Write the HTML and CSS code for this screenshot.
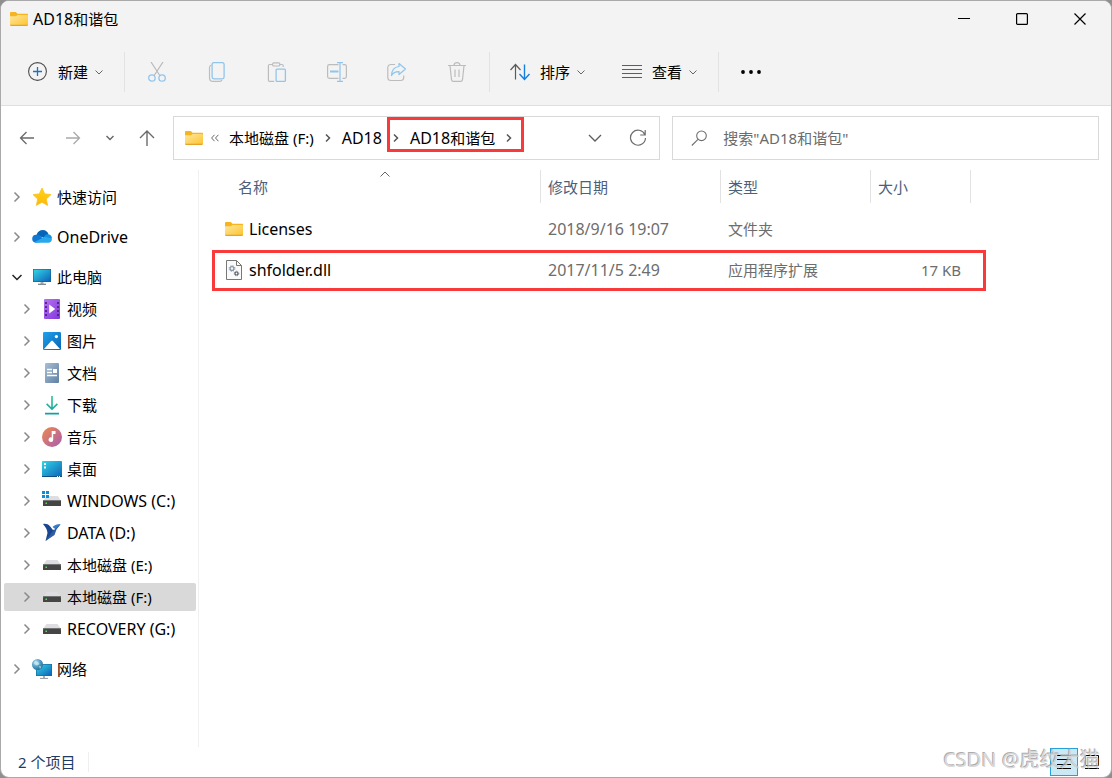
FILE: index.html
```html
<!DOCTYPE html>
<html lang="zh-CN">
<head>
<meta charset="utf-8">
<title>AD18和谐包</title>
<link rel="stylesheet" href="styles.css">
</head>
<body>
<svg class="defs" aria-hidden="true">
  <defs>
    <linearGradient id="gFolder" x1="0" y1="0" x2="1" y2="1"><stop offset="0" stop-color="#ffe7a0"/><stop offset="1" stop-color="#fcc42f"/></linearGradient>
    <linearGradient id="gScreen" x1="0" y1="0" x2="1" y2="1"><stop offset="0" stop-color="#34d5e6"/><stop offset="1" stop-color="#0a62b8"/></linearGradient>
    <linearGradient id="gVideo" x1="0" y1="0" x2="1" y2="1"><stop offset="0" stop-color="#b673f0"/><stop offset="1" stop-color="#8236dc"/></linearGradient>
    <linearGradient id="gPic" x1="0" y1="0" x2="1" y2="1"><stop offset="0" stop-color="#1fa3ea"/><stop offset="1" stop-color="#0a63b5"/></linearGradient>
    <linearGradient id="gDoc" x1="0" y1="0" x2="1" y2="1"><stop offset="0" stop-color="#a9bed3"/><stop offset="1" stop-color="#5f80a5"/></linearGradient>
    <linearGradient id="gMusic" x1="0" y1="0" x2="1" y2="1"><stop offset="0" stop-color="#f08a4b"/><stop offset="1" stop-color="#a75bb4"/></linearGradient>
    <linearGradient id="gDown" x1="0" y1="0" x2="0" y2="1"><stop offset="0" stop-color="#2cc58d"/><stop offset="1" stop-color="#0f9fa6"/></linearGradient>
    <linearGradient id="gStar" x1="0" y1="0" x2="0" y2="1"><stop offset="0" stop-color="#ffd515"/><stop offset="1" stop-color="#fdb80c"/></linearGradient>
    <radialGradient id="gGlobe" cx=".35" cy=".3" r=".8"><stop offset="0" stop-color="#b9e0f2"/><stop offset=".5" stop-color="#4f9cc5"/><stop offset="1" stop-color="#1d6590"/></radialGradient>
  </defs>
  <symbol id="folder" viewBox="0 0 18 14"><path d="M0 1.2C0 .5.5 0 1.2 0h4.6l1.7 1.8H17c.6 0 1 .4 1 1V8H0z" fill="#f6b41f"/><path d="M0 4.2h6l1.600-1.200H17c.6 0 1 .3 1 .8v9.200H0z" fill="url(#gFolder)"/><path d="M0 12.800h18c0 .7-.4 1.200-1 1.200H1c-.6 0-1-.5-1-1.200z" fill="#e5a32d"/></symbol>
  <symbol id="right" viewBox="0 0 10 12"><path d="M2.500 1.500 7 6l-4.500 4.500" fill="none" stroke="currentColor" stroke-width="1.500"/></symbol>
  <symbol id="next" viewBox="0 0 10 12"><path d="M3 2.500 6.500 6 3 9.500" fill="none" stroke="currentColor" stroke-width="1.500"/></symbol>
  <symbol id="down" viewBox="0 0 10 10"><path d="M1.500 3.500 5 7l3.500-3.500" fill="none" stroke="currentColor"/></symbol>
  <symbol id="drive" viewBox="0 0 20 20"><path d="M4.500 5h11L19 10H1z" fill="#dedee2"/><rect x="1" y="10" width="18" height="5" rx=".6" fill="#454545"/><path d="M1 9.500h18" stroke="#737373"/><rect x="3.500" y="11.500" width="1.500" height="1.500" fill="#3cf03c"/></symbol>
</svg>

<div class="window">
  <header class="top">
    <div class="titlebar">
      <svg class="folder"><use href="#folder"/></svg>
      <h1 class="title"><span class="latin">AD18</span>和谐包</h1>
      <button class="winbtn" aria-label="最小化"><svg width="12" height="12"><path d="M0 5.500h12" stroke="#000"/></svg></button>
      <button class="winbtn" aria-label="最大化"><svg width="12" height="12"><rect x=".6" y=".6" width="10.800" height="10.800" rx="1" fill="none" stroke="#000" stroke-width="1.200"/></svg></button>
      <button class="winbtn" aria-label="关闭"><svg width="12" height="12"><path d="m.5.5 11 11m0-11-11 11" stroke="#000" stroke-width="1.200"/></svg></button>
    </div>
    <div class="toolbar">
      <button class="cmd">
        <svg width="20" height="20" fill="none"><circle cx="9.500" cy="9.500" r="8.900" stroke="#4c4c4c" stroke-width="1.100"/><path d="M9.500 5v9M5 9.500h9" stroke="#1276c9" stroke-width="1.300"/></svg>
        <span>新建</span><svg class="chev"><use href="#down"/></svg>
      </button>
      <i class="sep"></i>
      <button class="tool" aria-label="剪切"><svg width="20" height="20" fill="none"><path d="m4 0 8.800 13.500M16 0 7.200 13.500" stroke="#b9b9b9" stroke-width="1.200"/><circle cx="4.900" cy="16" r="3.200" stroke="#90c5ec" stroke-width="1.300"/><circle cx="15.100" cy="16" r="3.200" stroke="#90c5ec" stroke-width="1.300"/></svg></button>
      <button class="tool" aria-label="复制"><svg width="20" height="20" fill="none"><path d="M4.500 3C3 3.500 2.500 4.300 2.500 5.500v10.200c0 2.400 1.400 3.700 3.700 3.700h6.600c1 0 1.800-.5 2.200-1.400" stroke="#bdbdbd" stroke-width="1.200"/><rect x="5.100" y=".6" width="12" height="16.300" rx="1.800" fill="#f3f3f3" stroke="#90c5ec" stroke-width="1.300"/></svg></button>
      <button class="tool" aria-label="粘贴"><svg width="20" height="20" fill="none"><path d="M6 2.500H2.600c-.8 0-1.200.5-1.200 1.200v14.500c0 .8.400 1.200 1.200 1.200h4.600M12.500 2.500H15c.8 0 1.200.5 1.200 1.200V5" stroke="#bcbcbc" stroke-width="1.200"/><rect x="5.500" y=".8" width="7.500" height="3.200" rx="1.600" stroke="#bcbcbc" stroke-width="1.200"/><rect x="9.100" y="7.100" width="9.300" height="12.300" rx="1" stroke="#90c5ec" stroke-width="1.300"/></svg></button>
      <button class="tool" aria-label="重命名"><svg width="20" height="20" fill="none"><path d="M11.500 2.600H2.400C1.200 2.600.6 3.200.6 4.400v10.200c0 1.200.6 1.800 1.800 1.800h9.100m4-13.800h2.100c1.200 0 1.800.6 1.800 1.800v10.200c0 1.200-.6 1.800-1.800 1.800h-2.100" stroke="#bcbcbc" stroke-width="1.200"/><path d="M10 .6h6M10 19.400h6M13 .6v18.800" stroke="#90c5ec" stroke-width="1.200"/><path d="M3 9.500h8.500" stroke="#90c5ec" stroke-width="2"/></svg></button>
      <button class="tool" aria-label="共享"><svg width="20" height="20" fill="none"><path d="M8 2.500H4C2 2.500.8 3.700.8 5.500v10c0 1.800 1.200 3 3.200 3h9.500c2 0 3.200-1.200 3.200-3v-2" stroke="#bcbcbc" stroke-width="1.200"/><path d="M12 1.500 18.500 7 12 12.500V9.600c-3.500-.2-5.700 1-7.500 3.900C4.700 8.400 7.500 5 12 4.500z" stroke="#90c5ec" stroke-width="1.200" stroke-linejoin="round"/></svg></button>
      <button class="tool" aria-label="删除"><svg width="20" height="20" fill="none" stroke="#bcbcbc" stroke-width="1.200"><path d="M1 3.500h18M7 3.500C7 1.500 8.200.6 10 .6s3 .9 3 2.900M3 3.500l1.500 14.200c.2 1.200.8 1.700 1.900 1.700h7.200c1.100 0 1.700-.5 1.900-1.700L17 3.500M8 7.500v7.500M12 7.500v7.500"/></svg></button>
      <i class="sep"></i>
      <button class="cmd">
        <svg width="20" height="20" fill="none"><path d="M5.500 17.500V3M.5 8l5-5.500 5 5.500" stroke="#5b5b5b" stroke-width="1.200"/><path d="M14.500 2.500V17m-5-5 5 5.500 5-5.500" stroke="#157fdc" stroke-width="1.400"/></svg>
        <span>排序</span><svg class="chev"><use href="#down"/></svg>
      </button>
      <button class="cmd">
        <svg width="20" height="20"><path d="M0 3.500h20M0 7.500h20M0 11.500h20M0 15.500h20" stroke="#5d5d5d"/></svg>
        <span>查看</span><svg class="chev"><use href="#down"/></svg>
      </button>
      <i class="sep"></i>
      <button class="tool" aria-label="查看更多"><svg width="20" height="20"><circle cx="2" cy="10" r="1.900"/><circle cx="10" cy="10" r="1.900"/><circle cx="18" cy="10" r="1.900"/></svg></button>
    </div>
  </header>

  <nav class="navrow" aria-label="导航">
    <button class="nav" aria-label="后退"><svg width="16" height="16" fill="none" stroke="#6a6a6a" stroke-width="1.300"><path d="M15 8H1.500M7.500 2l-6 6 6 6"/></svg></button>
    <button class="nav" aria-label="前进"><svg width="16" height="16" fill="none" stroke="#a9a9a9" stroke-width="1.300"><path d="M1 8h13.500M8.500 2l6 6-6 6"/></svg></button>
    <button class="nav narrow" aria-label="最近浏览的位置"><svg class="chev" viewBox="0 0 10 10" fill="none" stroke="#666" stroke-width="1.400"><path d="M1.500 3 5 6.500 8.500 3"/></svg></button>
    <button class="nav" aria-label="向上"><svg width="16" height="16" fill="none" stroke="#6a6a6a" stroke-width="1.400"><path d="M8 16V1M1 8l7-7 7 7"/></svg></button>
    <div class="address">
      <svg class="folder"><use href="#folder"/></svg>
      <svg class="more" viewBox="0 0 8 8" fill="none" stroke="#666"><path d="M3.500.8.600 4l2.900 3.200M7.400.8 4.500 4l2.900 3.200"/></svg>
      <a href="#f">本地磁盘 (F:)</a><svg class="crumb"><use href="#next"/></svg>
      <a class="latin" href="#ad18">AD18</a>
      <span class="current"><svg class="crumb"><use href="#next"/></svg><a href="#pack"><span class="latin">AD18</span>和谐包</a><svg class="crumb"><use href="#next"/></svg></span>
      <button class="addrbtn first" aria-label="以前的位置"><svg width="14" height="14" fill="none" stroke="#5c5c5c" stroke-width="1.300"><path d="m1 4 6 6 6-6"/></svg></button>
      <button class="addrbtn" aria-label="刷新"><svg width="18" height="18" fill="none" stroke="#6e6e6e" stroke-width="1.200"><path d="M15.800 5.500A7.500 7.500 0 1 0 16.500 9M16.200 1v5h-5"/></svg></button>
    </div>
    <label class="search">
      <svg width="16" height="16" fill="none" stroke="#6e6e6e" stroke-width="1.100"><circle cx="10.500" cy="5.800" r="4.800"/><path d="M7 9.300.8 15.500"/></svg>
      <input type="text" aria-label="搜索" placeholder='搜索"AD18和谐包"'>
    </label>
  </nav>

  <div class="body">
    <aside class="tree">
      <a class="node" href="#quick"><svg class="arrow"><use href="#right"/></svg><svg class="ico" viewBox="0 0 20 20"><path d="m10 1 2.700 5.900 6.300.7-4.700 4.400 1.300 6.400L10 15.200l-5.600 3.200 1.300-6.400L1 7.600l6.300-.7z" fill="url(#gStar)" stroke="#fcbf16" stroke-width=".8" stroke-linejoin="round"/></svg>快速访问</a>
      <a class="node group latin" href="#onedrive"><svg class="arrow"><use href="#right"/></svg><svg class="ico" viewBox="0 0 20 20"><path d="M4.500 8C5.500 4.500 8 3 10.800 3c2.800 0 4.900 1.700 5.700 4.300L12 11z" fill="#0664b8"/><path d="M4 15.800a4 4 0 0 1 .4-8c1.600-.1 3 .4 4.100 1.400l5.500 5z" fill="#0f78d4"/><path d="M12 9.500c1.300-1.700 2.600-2.300 4.500-2.200C18.600 7.600 20 9.500 20 11.600l-5 1.400z" fill="#1490df"/><path d="M2.500 15 12 10.200c2.500-.7 6 1 7.900 1.300.3 2.600-1.400 4.300-3.700 4.300H4c-.6 0-1-.3-1.500-.8z" fill="#28a8ea"/></svg>OneDrive</a>
      <a class="node group open" href="#pc"><svg class="arrow" viewBox="0 0 10 12"><path d="m.5 4 4.500 4.500L9.500 4" fill="none" stroke="#222" stroke-width="1.500"/></svg><svg class="ico" viewBox="0 0 20 20"><rect x="1" y="2" width="18" height="13" fill="#14608f"/><rect x="1.600" y="2.600" width="16.800" height="11.800" fill="url(#gScreen)"/><path d="M8.500 15h3v2h-3z" fill="#a4afb8"/><path d="M6 17.300h8" stroke="#73808a" stroke-width="1.200"/></svg>此电脑</a>
      <a class="node sub" href="#video"><svg class="arrow"><use href="#right"/></svg><svg class="ico" viewBox="0 0 20 20"><rect x="2" y="0" width="16" height="20" rx="1" fill="url(#gVideo)"/><path d="M4 3v14M16 3v14" stroke="#4b237d" stroke-width="1.800" stroke-dasharray="2 2"/><path d="m7.200 5.500 6 4.500-6 4.500z" fill="#fff"/></svg>视频</a>
      <a class="node sub" href="#pictures"><svg class="arrow"><use href="#right"/></svg><svg class="ico" viewBox="0 0 20 20"><rect x="1" y="1" width="18" height="18" rx="1.200" fill="url(#gPic)"/><path d="m2 18 7-7.700c.6-.6 1.400-.6 2 0L18 18z" fill="#fff"/><circle cx="14.400" cy="5.600" r="1.600" fill="#fff"/></svg>图片</a>
      <a class="node sub" href="#documents"><svg class="arrow"><use href="#right"/></svg><svg class="ico" viewBox="0 0 20 20"><rect x="3" y="0" width="14" height="20" rx="1" fill="url(#gDoc)"/><path d="M5 6.500h5M5 9.500h5M5 12.500h10" stroke="#fff" stroke-width="1.400"/><rect x="11" y="6" width="4" height="4" fill="#fff"/></svg>文档</a>
      <a class="node sub" href="#downloads"><svg class="arrow"><use href="#right"/></svg><svg class="ico" viewBox="0 0 20 20"><path d="M9.200 1h1.600v11.300l4-4 1.100 1.100L10 15.300 4.100 9.400l1.100-1.100 4 4zM3 17.800h14v1.600H3z" fill="url(#gDown)"/></svg>下载</a>
      <a class="node sub" href="#music"><svg class="arrow"><use href="#right"/></svg><svg class="ico" viewBox="0 0 20 20"><circle cx="10" cy="10" r="10" fill="url(#gMusic)"/><path d="M9.700 4h3.800v3h-2.300v5.700a2.300 2.300 0 1 1-1.500-2.200z" fill="#fff"/></svg>音乐</a>
      <a class="node sub" href="#desktop"><svg class="arrow"><use href="#right"/></svg><svg class="ico" viewBox="0 0 20 20"><rect x="0" y="2" width="20" height="16" rx=".8" fill="url(#gScreen)"/><path d="M2 4h2v2H2zm0 3.500h2v2H2z" fill="#fff"/><path d="M0 17.500h20" stroke="#0c4f85"/><path d="M15 17.500h1m1 0h1" stroke="#fff"/></svg>桌面</a>
      <a class="node sub latin" href="#c"><svg class="arrow"><use href="#right"/></svg><svg class="ico" viewBox="0 0 20 20"><path d="M5 5h11l3 5H1z" fill="#dedee2"/><rect x="1" y="10" width="18" height="5" fill="#454545"/><path d="M1 9.500h18" stroke="#777"/><path d="M3.500 11.500h1.500v1.500H3.500z" fill="#3cf03c"/><path d="M0 0h7v7H0z" fill="#fff"/><path d="M0 0h3v3H0zm4 0h3v3H4zM0 4h3v3H0zm4 0h3v3H4z" fill="#118bd8"/></svg>WINDOWS (C:)</a>
      <a class="node sub latin" href="#d"><svg class="arrow"><use href="#right"/></svg><svg class="ico" viewBox="0 0 20 20"><path d="M1 1c3-.5 5 .3 7 2.200l2.700 3.600 3.300.2-3 1.500 1.200 2.300L3.500 18l2-8C5.300 6.500 3.500 4 1 1z" fill="#184690"/><path d="M10.500 4C12.500 2 15 1 18.500 1c-1 2-2.300 3.600-5 5.200z" fill="#377dce"/><path d="m18.500 1-4 5.500-2 5.500-9 6 7.500-10z" fill="#2f5da5"/></svg>DATA (D:)</a>
      <a class="node sub" href="#e"><svg class="arrow"><use href="#right"/></svg><svg class="ico"><use href="#drive"/></svg>本地磁盘 (E:)</a>
      <a class="node sub selected" href="#f" aria-current="true"><svg class="arrow"><use href="#right"/></svg><svg class="ico"><use href="#drive"/></svg>本地磁盘 (F:)</a>
      <a class="node sub latin" href="#g"><svg class="arrow"><use href="#right"/></svg><svg class="ico"><use href="#drive"/></svg>RECOVERY (G:)</a>
      <a class="node group" href="#network"><svg class="arrow"><use href="#right"/></svg><svg class="ico" viewBox="0 0 20 20"><rect x="4" y="5" width="16" height="12" fill="#176996"/><rect x="4.600" y="5.600" width="14.800" height="10.800" fill="url(#gScreen)"/><path d="M11 17h2v2h-2z" fill="#a4afb8"/><path d="M8 19.400h8" stroke="#8c979f"/><circle cx="5.500" cy="5.500" r="5.500" fill="url(#gGlobe)"/><path d="m3 2 3 1 1.500 2L5 6.500 2 5zM7 7l2.500.5L8 10z" fill="#d0e9f3" opacity=".75"/></svg>网络</a>
    </aside>

    <main class="files">
      <table>
        <colgroup><col class="cname"><col class="cdate"><col class="ctype"><col class="csize"><col></colgroup>
        <thead><tr>
          <th><div class="hd name">名称<svg class="sort" viewBox="0 0 10 6" fill="none" stroke="#666"><path d="M.5 5.500 5 1l4.500 4.500"/></svg></div></th>
          <th><div class="hd">修改日期</div></th><th><div class="hd">类型</div></th><th><div class="hd">大小</div></th><th></th>
        </tr></thead>
        <tbody>
          <tr><td><a class="file latin" href="#licenses"><svg class="folder"><use href="#folder"/></svg>Licenses</a></td><td class="latin">2018/9/16 19:07</td><td>文件夹</td><td></td><td></td></tr>
          <tr class="marked"><td><a class="file latin" href="#dll"><svg class="dll" viewBox="0 0 18 20" fill="none"><path d="M1.500.5h10l5 5v14h-15z" fill="#fafafa" stroke="#777"/><path d="M11.500.5v5h5" stroke="#777"/><circle cx="7" cy="8.500" r="1.900" stroke="#8796a6" stroke-width="1.300"/><circle cx="7" cy="8.500" r="2.900" stroke="#8796a6" stroke-width=".9" stroke-dasharray="1.200 1.100"/><circle cx="11.500" cy="13.500" r="1.500" stroke="#596068" stroke-width="1.200"/><circle cx="11.500" cy="13.500" r="2.300" stroke="#596068" stroke-width=".8" stroke-dasharray="1 .8"/></svg>shfolder.dll</a></td><td class="latin">2017/11/5 2:49</td><td>应用程序扩展</td><td class="size">17 KB</td><td></td></tr>
        </tbody>
      </table>
    </main>
  </div>

  <footer class="status">
    <span class="count">2 个项目</span>
    <button class="view on" aria-label="详细信息"><svg width="14" height="16"><path d="M0 1.500h14M0 5.500h14M0 10.500h14M0 14.500h14" stroke="#000"/></svg></button>
    <button class="view" aria-label="大图标"><svg width="14" height="16" fill="none" stroke="#000"><path d="M.5 1.500h13v10H.5zM0 14.500h14"/></svg></button>
    <span class="watermark">CSDN @虎纹大猫</span>
  </footer>
</div>
</body>
</html>
```
FILE: styles.css
```css
* { box-sizing: border-box; }

body {
  margin: 0;
  background: #8f8f8f;
  color: #000;
  font: 15px/20px "Noto Sans", "Noto Sans CJK SC", sans-serif;
}

button {
  display: flex;
  align-items: center;
  justify-content: center;
  padding: 0;
  border: 0;
  background: none;
  color: inherit;
  font: inherit;
}

a { color: inherit; text-decoration: none; }
svg { display: block; flex: none; }

.defs { position: absolute; width: 0; height: 0; }
.folder { width: 18px; height: 14px; }
.chev { width: 10px; height: 10px; color: #666; }
.latin { font-size: 16px; }

.window {
  display: flex;
  flex-direction: column;
  min-height: 100vh;
  overflow: hidden;
  border: 1px solid #a9a9a9;
  border-radius: 9px;
  background: #fff;
}

/* Title bar and command bar */
.top { background: #f3f3f3; border-bottom: 1px solid #dfdfdf; }
.titlebar { display: flex; align-items: center; height: 36px; padding: 0 2px 0 9px; }
.title { flex: 1; margin: 0 0 0 5px; font-size: 15px; font-weight: 400; }
.winbtn { width: 58px; height: 36px; }

.toolbar { display: flex; align-items: center; height: 68px; padding: 2px 0 0 9px; }
.cmd { height: 40px; padding: 0 18px; }
.cmd span { margin: 0 6px 0 10px; }
.tool { width: 60px; height: 40px; }
.sep { width: 1px; height: 40px; margin: 0 2px; background: #e2e2e2; }

/* Address row */
.navrow { display: flex; align-items: center; padding: 10px 12px 10px 3px; }
.nav { width: 46px; height: 44px; }
.narrow { width: 28px; }

.address, .search {
  display: flex;
  align-items: center;
  height: 44px;
  border: 1px solid #d9d9d9;
}
.address { flex: 8 1 0; margin-left: 3px; white-space: nowrap; }
.address .folder { margin-left: 11px; }
.search { flex: 7 1 0; min-width: 0; margin-left: 12px; }
.search svg { margin-left: 18px; }
.search input {
  flex: 1;
  min-width: 0;
  margin: 0 16px;
  padding: 0;
  border: 0;
  outline: 0;
  background: none;
  font: inherit;
}
.search input::placeholder { color: #6b6b6b; opacity: 1; }

.more { width: 8px; height: 8px; margin: 0 10px 0 8px; }
.crumb { width: 10px; height: 12px; margin: 0 9px; color: #555; }
.current { position: relative; display: flex; align-items: center; }
.current::after {
  content: "";
  position: absolute;
  inset: -11px -1px -4px 5px;
  border: 3px solid #f93a3a;
}
.addrbtn { width: 43px; height: 42px; }
.first { margin-left: auto; }

/* Navigation tree */
.body { display: flex; flex: 1; }
.tree { flex: none; width: 198px; padding: 13px 2px 0 3px; border-right: 1px solid #f0f0f0; }
.node {
  display: flex;
  align-items: center;
  height: 28px;
  margin-bottom: 4px;
  padding-left: 8px;
  border-radius: 2px;
  white-space: nowrap;
}
.group { margin-top: 12px; }
.sub { padding-left: 18px; }
.selected { background: #d9d9d9; }
.arrow { width: 10px; height: 12px; color: #8a8a8a; }
.ico { width: 20px; height: 20px; margin: 0 5px 0 10px; }

/* File list */
.files { flex: 1; min-width: 0; padding-left: 13px; }
table { width: 774px; max-width: 100%; table-layout: fixed; border-collapse: collapse; }
.cname { width: 329px; }
.cdate { width: 180px; }
.ctype { width: 150px; }
.csize { width: 100px; }
th { height: 39px; padding: 0; vertical-align: top; text-align: left; font-weight: 400; color: #4c607a; }
.hd { position: relative; height: 33px; padding: 7px 0 0 7px; border-right: 1px solid #e2e2e2; }
.name { margin-left: 18px; padding-left: 8px; }
.sort { position: absolute; top: 1px; left: 50%; width: 10px; height: 6px; margin-left: -5px; }
td { height: 41px; padding: 0 0 2px 7px; color: #6d6d6d; white-space: nowrap; }
td:first-child { padding-left: 13px; color: #000; }
td.size { padding-right: 10px; text-align: right; }
.file { display: flex; align-items: center; gap: 6px; }
.dll { width: 18px; height: 20px; }
.marked { outline: 3px solid #f93a3a; outline-offset: -3px; }

/* Status bar */
.status { position: relative; display: flex; align-items: center; height: 30px; padding-right: 5px; }
.count { width: 88px; margin-right: auto; padding-left: 17px; border-right: 1px solid #efefef; color: #1f3b62; }
.view { width: 28px; height: 28px; }
.on { border: 1px solid #26a0da; background: #cbe8f6; }
.watermark {
  position: absolute;
  right: 11px;
  bottom: 4px;
  color: #d0d0d0;
  font-size: 20px;
  line-height: 26px;
  text-shadow: -1px -1px 0 #999;
  opacity: .8;
  pointer-events: none;
}
```
